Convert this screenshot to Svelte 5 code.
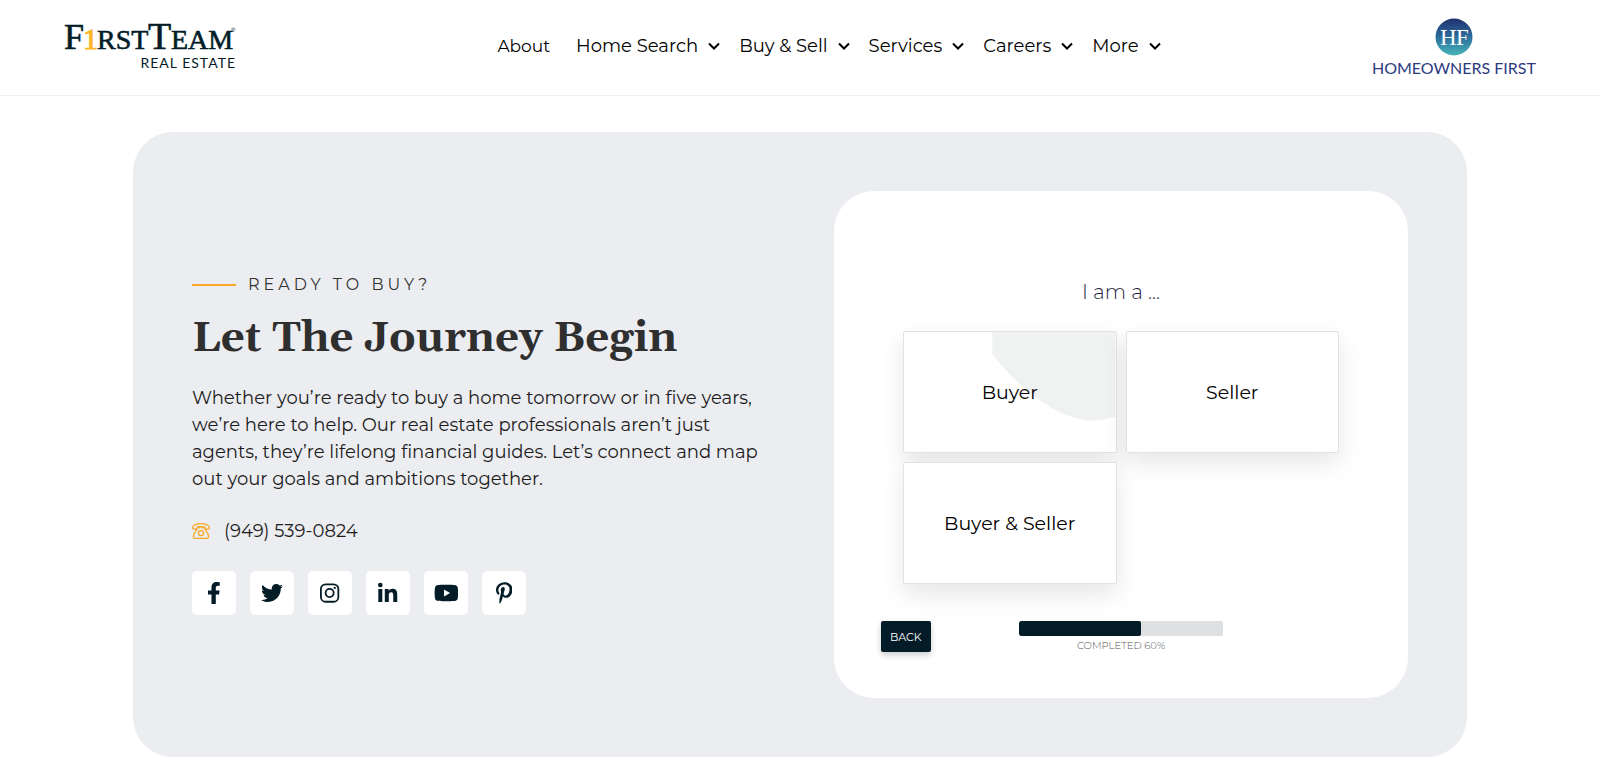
<script lang="ts">
	const menus = ['Home Search', 'Buy & Sell', 'Services', 'Careers', 'More'];
	const options = ['Buyer', 'Seller', 'Buyer & Seller'];

	const socials = [
		{
			name: 'Facebook',
			width: 320,
			path: 'M279.14 288l14.22-92.66h-88.91v-60.13c0-25.35 12.42-50.06 52.24-50.06h40.42V6.26S260.43 0 225.36 0c-73.22 0-121.08 44.38-121.08 124.72v70.62H22.89V288h81.39v224h100.17V288z'
		},
		{
			name: 'Twitter',
			width: 512,
			path: 'M459.37 151.716c.325 4.548.325 9.097.325 13.645 0 138.72-105.583 298.558-298.558 298.558-59.452 0-114.68-17.219-161.137-47.106 8.447.974 16.568 1.299 25.34 1.299 49.055 0 94.213-16.568 130.274-44.832-46.132-.975-84.792-31.188-98.112-72.772 6.498.974 12.995 1.624 19.818 1.624 9.421 0 18.843-1.3 27.614-3.573-48.081-9.747-84.143-51.98-84.143-102.985v-1.299c13.969 7.797 30.214 12.67 47.431 13.319-28.264-18.843-46.781-51.005-46.781-87.391 0-19.492 5.197-37.36 14.294-52.954 51.655 63.675 129.3 105.258 216.365 109.807-1.624-7.797-2.599-15.918-2.599-24.04 0-57.828 46.782-104.934 104.934-104.934 30.213 0 57.502 12.67 76.67 33.137 23.715-4.548 46.456-13.32 66.599-25.34-7.798 24.366-24.366 44.833-46.132 57.827 21.117-2.273 41.584-8.122 60.426-16.243-14.292 20.791-32.161 39.308-52.628 54.253z'
		},
		{ name: 'Instagram', width: 448, path: '' },
		{
			name: 'LinkedIn',
			width: 448,
			path: 'M100.28 464H7.4V164.9h92.88zM53.79 124.1C24.09 124.1 0 99.5 0 69.8a53.79 53.79 0 0 1 107.58 0c0 29.7-24.1 54.3-53.79 54.3zM447.9 464h-92.68V318.4c0-34.7-.7-79.2-48.29-79.2-48.29 0-55.69 37.7-55.69 76.7V464h-92.78V164.9h89.08v40.8h1.3c12.4-23.5 42.69-48.3 87.88-48.3 94 0 111.28 61.9 111.28 142.3V464z'
		},
		{
			name: 'YouTube',
			width: 576,
			path: 'M549.655 124.083c-6.281-23.65-24.787-42.276-48.284-48.597C458.781 64 288 64 288 64S117.22 64 74.629 75.486c-23.497 6.322-42.003 24.947-48.284 48.597-11.412 42.867-11.412 132.305-11.412 132.305s0 89.438 11.412 132.305c6.281 23.65 24.787 41.5 48.284 47.821C117.22 448 288 448 288 448s170.78 0 213.371-11.486c23.497-6.321 42.003-24.171 48.284-47.821 11.412-42.867 11.412-132.305 11.412-132.305s0-89.438-11.412-132.305zm-317.51 213.508V175.185l142.739 81.205-142.739 81.201z'
		},
		{
			name: 'Pinterest',
			width: 384,
			path: 'M204 6.5C101.4 6.5 0 74.9 0 185.6 0 256 39.6 296 63.6 296c9.9 0 15.6-27.6 15.6-35.4 0-9.3-23.7-29.1-23.7-67.8 0-80.4 61.2-137.4 140.4-137.4 68.1 0 118.5 38.7 118.5 109.8 0 53.1-21.3 152.7-90.3 152.7-24.9 0-46.2-18-46.2-43.8 0-37.8 26.4-74.4 26.4-113.4 0-66.2-93.9-54.2-93.9 25.8 0 16.8 2.1 35.4 9.6 50.7-13.8 59.4-42 147.9-42 209.1 0 18.9 2.7 37.5 4.5 56.4 3.4 3.8 1.7 3.4 6.9 1.5 50.4-69 48.6-82.5 71.4-172.8 12.3 23.4 44.1 36 69.3 36 106.2 0 153.9-103.5 153.9-196.8C384 71.3 298.2 6.5 204 6.5z'
		}
	];

	let progress = $state(60);
	let selected = $state('Buyer');

	function back() {
		progress = Math.max(0, progress - 20);
	}
</script>

<header>
	<a class="brand" href="/" aria-label="First Team Real Estate">
		<svg width="176" height="60" viewBox="0 0 176 60">
			<g class="wordmark">
				<text x="0" y="37" font-size="36">F</text>
				<text x="19" y="37" font-size="30" class="one">1</text>
				<text x="33" y="37" font-size="28">RST</text>
				<text x="84" y="37" font-size="38">T</text>
				<text x="107" y="37" font-size="28">EAM</text>
			</g>
			<text class="mark" x="167" y="20">®</text>
			<text class="tagline" x="172" y="56" text-anchor="end">REAL ESTATE</text>
		</svg>
	</a>

	<nav>
		<a class="about" href="/about">About</a>
		{#each menus as menu}
			<button type="button">
				{menu}
				<svg width="12" height="8" viewBox="0 0 12 8">
					<path d="M1 1.500 6 6.500l5-5" fill="none" stroke="#000" stroke-width="2" />
				</svg>
			</button>
		{/each}
	</nav>

	<a class="partner" href="/homeowners-first">
		<svg width="38" height="38" viewBox="0 0 38 38">
			<defs>
				<linearGradient id="badge" x1="0" y1="0" x2="0" y2="1">
					<stop offset="0" stop-color="#22306f" />
					<stop offset="0.500" stop-color="#2c6d9c" />
					<stop offset="1" stop-color="#48b5b8" />
				</linearGradient>
			</defs>
			<circle cx="19" cy="19" r="18.500" fill="url(#badge)" />
			<text x="5" y="27" font-size="23">H</text>
			<text x="21" y="27" font-size="23">F</text>
		</svg>
		<span>HOMEOWNERS FIRST</span>
	</a>
</header>

<main>
	<section class="intro">
		<p class="eyebrow">READY TO BUY?</p>
		<h1>Let The Journey Begin</h1>
		<p class="copy">
			Whether you’re ready to buy a home tomorrow or in five years, we’re here to help. Our real
			estate professionals aren’t just agents, they’re lifelong financial guides. Let’s connect and
			map out your goals and ambitions together.
		</p>
		<a class="phone" href="tel:9495390824">
			<svg width="18" height="16" viewBox="0 0 18 16" fill="none" stroke="#f9a825" stroke-width="1.300">
				<path d="M.7 4.200C1.600 1.800 5 .7 9 .7s7.400 1.100 8.300 3.500c.2 1.100-.5 1.900-1.500 1.900h-1.600c-.9 0-1.400-.6-1.400-1.400V4H5.200v.7c0 .8-.5 1.400-1.400 1.400H2.200C1.200 6.100.5 5.300.7 4.200z" />
				<path d="M5.200 5.500C4.600 8.300 1.300 9.700 1.300 13.500c0 1.200.6 1.800 1.700 1.800h12c1.100 0 1.700-.6 1.700-1.800 0-3.800-3.300-5.200-3.900-8M7.500 3v2.500M10.500 3v2.500" />
				<circle cx="9" cy="10.200" r="2.500" />
			</svg>
			(949) 539-0824
		</a>
		<div class="socials">
			{#each socials as social}
				<a href="/" aria-label={social.name}>
					<svg height="22" viewBox="0 0 {social.width} 512">
						{#if social.path}
							<path d={social.path} fill="#031c27" />
						{:else}
							<g fill="none" stroke="#031c27" stroke-width="42">
								<rect x="21" y="53" width="406" height="406" rx="112" />
								<circle cx="224" cy="256" r="94" />
							</g>
							<circle cx="343" cy="137" r="27" fill="#031c27" />
						{/if}
					</svg>
				</a>
			{/each}
		</div>
	</section>

	<section class="card">
		<h2>I am a ...</h2>
		<div class="options">
			{#each options as option}
				<button type="button" onclick={() => (selected = option)}>
					{#if selected === option}
						<svg viewBox="0 0 213 122" preserveAspectRatio="none">
							<path d="M89 0V23Q104 42 120 56C145 79 170 90 190 90Q202 90 213 86V0z" fill="#f0f2f1" />
						</svg>
					{/if}
					<span>{option}</span>
				</button>
			{/each}
		</div>
		<div class="steps">
			<button type="button" onclick={back}>BACK</button>
			<div class="progress">
				<div class="track">
					<div class="fill" style="width: {progress}%"></div>
				</div>
				<p>COMPLETED {progress}%</p>
			</div>
		</div>
	</section>
</main>

<style>
	:global(body) {
		background: #fff;
		color: #000;
		font-family: Montserrat, Inter, sans-serif;
	}

	a {
		color: inherit;
		text-decoration: none;
	}

	button {
		font: inherit;
		color: inherit;
		cursor: pointer;
	}

	svg {
		display: block;
	}

	header {
		display: flex;
		align-items: flex-start;
		justify-content: space-between;
		height: 95px;
		padding: 0 64px;
		border-bottom: 1px solid #f0f0f0;
	}

	.brand {
		padding-top: 12px;
	}

	.wordmark {
		font-family: 'Liberation Serif', serif;
		fill: #031c27;
		stroke: #031c27;
		stroke-width: 0.6px;
	}

	.wordmark .one {
		fill: #fdb525;
		stroke: #fdb525;
		stroke-width: 1px;
	}

	.mark {
		font-family: 'Liberation Sans', sans-serif;
		font-size: 6px;
		fill: #031c27;
	}

	.tagline {
		font-family: Lato, sans-serif;
		font-size: 14px;
		letter-spacing: 1px;
		fill: #031c27;
	}

	nav {
		display: flex;
		align-items: center;
		gap: 19px;
		padding: 34px 0 0 46px;
		font-size: 18px;
		line-height: 24px;
	}

	.about {
		padding-right: 7px;
		font-size: 17px;
	}

	nav button {
		display: flex;
		align-items: center;
		gap: 10px;
		padding: 0;
		border: 0;
		background: none;
	}

	.partner {
		display: flex;
		flex-direction: column;
		align-items: center;
		gap: 2px;
		padding-top: 18px;
		font-family: Lato, sans-serif;
		font-size: 16px;
		line-height: 20px;
		color: #2b3a7e;
	}

	.partner text {
		font-family: 'Liberation Serif', serif;
		fill: #fff;
	}

	main {
		display: grid;
		grid-template-columns: 1fr 1fr;
		gap: 68px;
		align-items: center;
		box-sizing: border-box;
		max-width: 1334px;
		margin: 36px auto 16px;
		padding: 59px;
		border-radius: 40px;
		background: #ecedf1;
	}

	.eyebrow {
		display: flex;
		align-items: center;
		gap: 12px;
		margin: 0;
		font-size: 16px;
		line-height: 20px;
		letter-spacing: 4px;
		color: #333;
	}

	.eyebrow::before {
		content: '';
		width: 44px;
		height: 2px;
		background: #f9a825;
	}

	h1 {
		margin: 16px 0 18px;
		font-family: Gelasio, Georgia, 'Liberation Serif', serif;
		font-size: 42px;
		font-weight: 700;
		line-height: 56px;
		color: #2f2f2f;
	}

	.copy {
		margin: 0;
		font-size: 18px;
		line-height: 27px;
		color: #1c1c1c;
	}

	.phone {
		display: flex;
		align-items: center;
		gap: 14px;
		margin: 25px 0 26px;
		font-size: 18px;
		line-height: 27px;
		color: #1c1c1c;
	}

	.socials {
		display: flex;
		gap: 14px;
	}

	.socials a {
		display: flex;
		align-items: center;
		justify-content: center;
		width: 44px;
		height: 44px;
		border-radius: 5px;
		background: #fff;
	}

	.card {
		padding: 87px 47px 45px;
		border-radius: 40px;
		background: #fff;
	}

	h2 {
		margin: 0 0 25px;
		font-size: 20px;
		font-weight: 300;
		line-height: 28px;
		text-align: center;
		color: #1d1d3d;
	}

	.options {
		display: grid;
		grid-template-columns: 1fr 1fr;
		gap: 9px;
		padding: 0 22px;
	}

	.options button {
		position: relative;
		height: 122px;
		padding: 0;
		overflow: hidden;
		border: 1px solid #e2e2e2;
		border-radius: 2px;
		background: #fff;
		box-shadow: 0 10px 24px rgba(0, 0, 0, 0.1);
		font-size: 19px;
	}

	.options svg {
		position: absolute;
		inset: 0;
		width: 100%;
		height: 100%;
	}

	.options span {
		position: relative;
	}

	.steps {
		display: grid;
		grid-template-columns: 1fr 204px 1fr;
		align-items: start;
		margin-top: 37px;
	}

	.steps button {
		justify-self: start;
		height: 31px;
		padding: 0 9px;
		border: 0;
		border-radius: 2px;
		background: #031c27;
		box-shadow: 0 3px 6px rgba(0, 0, 0, 0.2);
		font-size: 11px;
		color: #fff;
	}

	.track {
		height: 15px;
		overflow: hidden;
		border-radius: 2px;
		background: #dfe0e2;
	}

	.fill {
		height: 100%;
		border-radius: 2px;
		background: #031c27;
	}

	.progress p {
		margin: 3px 0 0;
		font-size: 10px;
		font-weight: 300;
		line-height: 14px;
		text-align: center;
		color: #555;
	}
</style>
